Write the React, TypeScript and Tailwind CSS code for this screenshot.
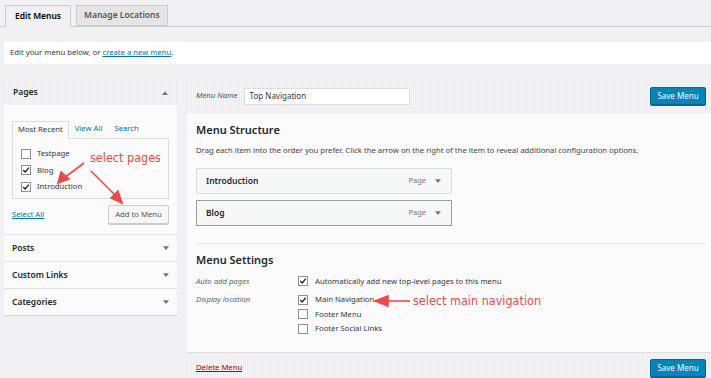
const hatch =
  "bg-[repeating-linear-gradient(90deg,#ecebee_0px,#ecebee_1px,#f6f5f7_1px,#f6f5f7_2px)]";

function Check({ on }: { on?: boolean }) {
  return (
    <span className="flex h-[10px] w-[10px] shrink-0 items-center justify-center border border-[#8c8f94] bg-white">
      {on && (
        <svg viewBox="0 0 10 10" className="h-[8px] w-[8px]">
          <path d="M1.5 5 L4 7.5 L8.5 2" fill="none" stroke="#1e1e1e" strokeWidth="1.6" />
        </svg>
      )}
    </span>
  );
}

function Caret({ up }: { up?: boolean }) {
  return (
    <svg viewBox="0 0 8 5" className="h-[4px] w-[6px]">
      <path d={up ? "M0 5 L4 0 L8 5Z" : "M0 0 L8 0 L4 5Z"} fill="#72777c" />
    </svg>
  );
}

function Section({ title }: { title: string }) {
  return (
    <div className="flex h-[27px] items-center justify-between border-t border-[#e2e1e4] px-[8px]">
      <span className="text-[8.5px] font-semibold text-[#23282d]">{title}</span>
      <Caret />
    </div>
  );
}

function MenuItem({ name, dark }: { name: string; dark?: boolean }) {
  return (
    <div
      className={`flex h-[26px] w-[256px] items-center justify-between border bg-[#f6f7f7] pl-[9px] pr-[10px] ${
        dark ? "border-[#9b9b9b]" : "border-[#dcdcde]"
      }`}
    >
      <span className="text-[8.5px] font-semibold text-[#23282d]">{name}</span>
      <span className="flex items-center gap-[9px] text-[7.5px] text-[#72777c]">
        Page <Caret />
      </span>
    </div>
  );
}

function SaveButton() {
  return (
    <button className="h-[18px] w-[56px] rounded-[2px] border border-[#006799] bg-[#0085ba] text-[8px] text-white shadow-[0_1px_0_#006799]">
      Save Menu
    </button>
  );
}

export default function App() {
  return (
    <div className="relative h-[378px] w-[711px] overflow-hidden bg-[#f1f0f2] font-['Noto_Sans',sans-serif] text-[#32373c]">
      {/* Tabs */}
      <div className="flex gap-[5px] border-b border-[#ccc] px-[5px] pt-[5px]">
        <div className="-mb-px flex h-[22px] items-center border border-b-[#f1f0f2] border-[#ccc] bg-[#f1f0f2] px-[9px] text-[8.5px] font-semibold text-black">
          Edit Menus
        </div>
        <div className="flex h-[21px] items-center border border-[#ccc] bg-[#e5e5e5] px-[7px] text-[8.5px] font-semibold text-[#555]">
          Manage Locations
        </div>
      </div>

      {/* Notice */}
      <div className="ml-[4px] mt-[15px] flex h-[22px] items-center bg-white px-[6px] text-[7.7px]">
        Edit your menu below, or&nbsp;
        <span className="text-[#0073aa] underline">create a new menu</span>.
      </div>

      <div className="mt-[16px] flex gap-[10px] pl-[4px]">
        {/* Left column */}
        <div className="w-[173px] self-start bg-[#fbfbfb] shadow-[0_1px_1px_rgba(0,0,0,0.1)]">
          <div className={`flex h-[25px] items-center justify-between px-[9px] ${hatch}`}>
            <span className="text-[8.5px] font-semibold text-[#23282d]">Pages</span>
            <Caret up />
          </div>
          <div className="px-[8px] pb-[10px] pt-[16px]">
            <div className="flex items-end text-[7.7px]">
              <div className="-mb-px flex h-[18px] items-center border border-b-[#fbfbfb] border-[#dcdcde] bg-[#fbfbfb] px-[5px] text-[#32373c]">
                Most Recent
              </div>
              <span className="ml-[6px] pb-[3px] text-[#0073aa]">View All</span>
              <span className="ml-[12px] pb-[3px] text-[#0073aa]">Search</span>
            </div>
            <div className="flex h-[61px] flex-col gap-[5px] border border-[#dcdcde] px-[8px] pt-[9px] text-[7.7px]">
              <label className="flex items-center gap-[6px]">
                <Check /> Testpage
              </label>
              <label className="flex items-center gap-[6px]">
                <Check on /> Blog
              </label>
              <label className="flex items-center gap-[6px]">
                <Check on /> Introduction
              </label>
            </div>
            <div className="mt-[6px] flex items-center justify-between">
              <span className="text-[7.7px] text-[#0073aa] underline">Select All</span>
              <button className="h-[19px] w-[61px] rounded-[2px] border border-[#ccc] bg-[#f7f7f7] text-[7.7px] text-[#555] shadow-[0_1px_0_#ccc]">
                Add to Menu
              </button>
            </div>
          </div>
          <Section title="Posts" />
          <Section title="Custom Links" />
          <Section title="Categories" />
        </div>

        {/* Right column */}
        <div className="flex h-[298px] flex-1 flex-col bg-[#fbfbfc] shadow-[0_1px_1px_rgba(0,0,0,0.08)]">
          <div className={`flex h-[32px] items-center justify-between pl-[9px] pr-[5px] ${hatch}`}>
            <div className="flex items-center gap-[6px]">
              <span className="text-[7.7px] italic text-[#555]">Menu Name</span>
              <div className="flex h-[17px] w-[166px] items-center border border-[#ddd] bg-white px-[5px] text-[8px] text-[#32373c]">
                Top Navigation
              </div>
            </div>
            <SaveButton />
          </div>

          <div className="flex-1 border-t border-[#eee] pl-[9px] pr-[5px]">
            <h3 className="mt-[9px] text-[11px] font-semibold text-[#23282d]">Menu Structure</h3>
            <p className="mt-[6px] text-[7.7px] text-[#444]">
              Drag each item into the order you prefer. Click the arrow on the right of the item to reveal additional configuration options.
            </p>
            <div className="mt-[12px] flex flex-col gap-[6px]">
              <MenuItem name="Introduction" />
              <MenuItem name="Blog" dark />
            </div>
            <div className="mt-[17px] border-t border-[#efe9ef]" />
            <h3 className="mt-[8px] text-[11px] font-semibold text-[#23282d]">Menu Settings</h3>
            <div className="mt-[7px] flex text-[7.7px]">
              <span className="w-[102px] italic text-[#666]">Auto add pages</span>
              <label className="flex items-center gap-[7px]">
                <Check on /> Automatically add new top-level pages to this menu
              </label>
            </div>
            <div className="mt-[7px] flex text-[7.7px]">
              <span className="w-[102px] italic text-[#666]">Display location</span>
              <div className="flex flex-col gap-[3px]">
                <label className="flex items-center gap-[7px]">
                  <Check on /> Main Navigation
                </label>
                <label className="flex items-center gap-[7px]">
                  <Check /> Footer Menu
                </label>
                <label className="flex items-center gap-[7px]">
                  <Check /> Footer Social Links
                </label>
              </div>
            </div>
          </div>

          <div className={`flex h-[26px] items-start justify-between border-t border-[#e2dce2] pl-[9px] pr-[5px] pt-[6px] ${hatch}`}>
            <span className="mt-[3px] text-[7.7px] text-[#a00] underline">Delete Menu</span>
            <SaveButton />
          </div>
        </div>
      </div>

      {/* Annotations */}
      <span className="absolute left-[90px] top-[149px] font-['DejaVu_Sans_Condensed','DejaVu_Sans',sans-serif] text-[12.5px] text-[#f04848]">
        select pages
      </span>
      <span className="absolute left-[413px] top-[292px] font-['DejaVu_Sans_Condensed','DejaVu_Sans',sans-serif] text-[12.5px] text-[#f04848]">
        select main navigation
      </span>
      <svg className="pointer-events-none absolute left-0 top-0" width="711" height="378">
        <g stroke="#f04848" strokeWidth="1.6" fill="#f04848">
          <line x1="84" y1="163" x2="64" y2="178" />
          <path d="M58 183 L61 172 L69 179Z" />
          <line x1="91" y1="171" x2="116" y2="196" />
          <path d="M122 203 L111 198 L118 191Z" />
          <line x1="410" y1="301" x2="385" y2="301" />
          <path d="M375 301 L388 296 L388 306Z" />
        </g>
      </svg>
    </div>
  );
}
